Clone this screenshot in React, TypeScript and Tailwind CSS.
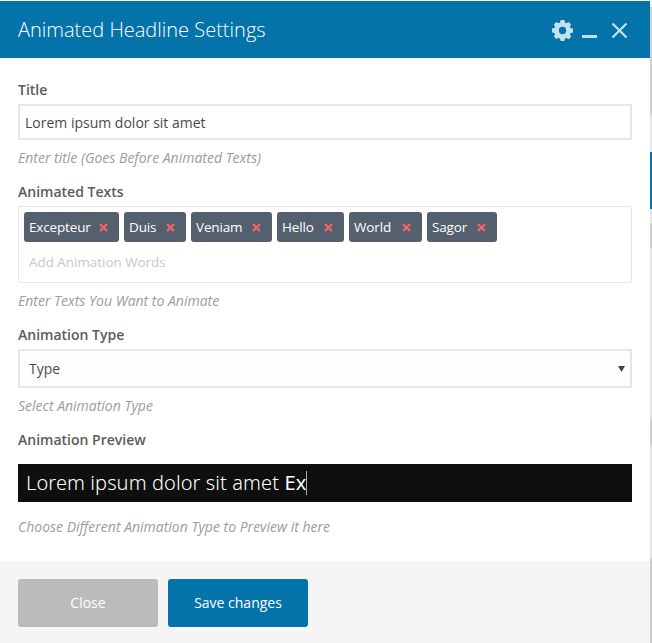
const font = "font-['Open_Sans',sans-serif]";

function Tag({ label, w }: { label: string; w: string }) {
  return (
    <span className={`${w} flex h-[30px] items-center justify-between rounded-[3px] bg-[#54606e] pr-[11px] pl-[5px] text-[13.500px] tracking-[-0.15px] text-white`}>
      {label}
      <svg width="9" height="9" viewBox="0 0 9 9" fill="none" stroke="#fa616a" strokeWidth="2.200">
        <path d="M1 1 8 8M8 1 1 8" />
      </svg>
    </span>
  );
}

function Label({ children }: { children: string }) {
  return <div className="text-[14px] leading-[20px] font-semibold text-[#5b5b5b]">{children}</div>;
}

function Hint({ children }: { children: string }) {
  return <div className="text-[14px] leading-[20px] text-[#9c9c9c] italic">{children}</div>;
}

export default function App() {
  return (
    <div className={`${font} flex h-[643px] w-[652px] overflow-hidden bg-white`}>
      <div className="w-[650px] shrink-0">
        <header className="mt-px flex h-[57px] items-center justify-between bg-[#0473aa] pr-[22px] pl-[18px] pt-px">
          <h1 className="text-[20px] font-light text-white">Animated Headline Settings</h1>
          <div className="flex items-center text-[#c4e0ee]">
            <svg width="21" height="21" viewBox="0 0 22 22" fill="currentColor">
              <path fillRule="evenodd" d="M9 0h4l.6 2.600 1.500.7L17.500 2l2.600 2.600-1.300 2.400.7 1.500 2.500.6v4l-2.500.6-.7 1.500 1.300 2.300-2.600 2.600-2.400-1.300-1.500.7L13 22H9l-.6-2.500-1.500-.7L4.500 20l-2.600-2.600 1.300-2.300-.7-1.500L0 13V9l2.500-.6.7-1.500L1.900 4.600 4.500 2l2.400 1.300 1.500-.7zM11 7.200a3.800 3.800 0 1 0 0 7.600 3.800 3.800 0 0 0 0-7.600z" />
            </svg>
            <span className="mt-[13px] ml-[9px] h-[3px] w-[15px] bg-current" />
            <svg className="ml-[14px]" width="17" height="17" viewBox="0 0 17 17" fill="none" stroke="currentColor" strokeWidth="2.200">
              <path d="M1.500 1.500 15.500 15.500M15.500 1.500 1.500 15.500" />
            </svg>
          </div>
        </header>

        <main className="flex h-[503px] flex-col px-[18px] pt-[22px]">
          <Label>Title</Label>
          <div className="mt-[4px] flex h-[36px] items-center border-2 border-[#e6e6e6] px-[5px] text-[14px] text-[#4a4a4a]">
            Lorem ipsum dolor sit amet
          </div>
          <div className="mt-[8px]"><Hint>Enter title (Goes Before Animated Texts)</Hint></div>

          <div className="mt-[14px]"><Label>Animated Texts</Label></div>
          <div className="mt-[4px] h-[77px] rounded-[2px] border border-[#e6e6e6] px-[5px] pt-[5px]">
            <div className="flex gap-[5px]">
              <Tag label="Excepteur" w="w-[95px]" />
              <Tag label="Duis" w="w-[62px]" />
              <Tag label="Veniam" w="w-[81px]" />
              <Tag label="Hello" w="w-[67px]" />
              <Tag label="World" w="w-[73px]" />
              <Tag label="Sagor" w="w-[70px]" />
            </div>
            <div className="mt-[10px] pl-[5px] text-[13.400px] leading-[20px] text-[#c8c8c8]">Add Animation Words</div>
          </div>
          <div className="mt-[8px]"><Hint>Enter Texts You Want to Animate</Hint></div>

          <div className="mt-[14px]"><Label>Animation Type</Label></div>
          <div className="mt-[4px] flex h-[39px] items-center justify-between border-2 border-[#e6e6e6] bg-[#fdfdfd] pr-[5px] pl-[9px] text-[14px] text-[#4a4a4a]">
            Type
            <svg width="7" height="6" viewBox="0 0 7 6" fill="#3f444a"><path d="M0 0h7L3.500 6z" /></svg>
          </div>
          <div className="mt-[8px]"><Hint>Select Animation Type</Hint></div>

          <div className="mt-[14px]"><Label>Animation Preview</Label></div>
          <div className="mt-[14px] flex h-[38px] items-center bg-[#0f0f0f] pl-[8px] font-['Noto_Sans',sans-serif] text-[20px] font-light tracking-[0.1px] text-white">
            Lorem ipsum dolor sit amet&nbsp;<b className="font-normal">Ex</b>
            <span className="h-[24px] w-px bg-[#9fb3bb]" />
          </div>
          <div className="mt-[15px]"><Hint>Choose Different Animation Type to Preview it here</Hint></div>
        </main>

        <footer className="flex h-[82px] gap-[10px] bg-[#f5f5f5] px-[18px] pt-[18px]">
          <button className="h-[48px] w-[140px] rounded-[3px] bg-[#bbbbbb] pb-[2px] text-[14px] text-white">Close</button>
          <button className="h-[48px] w-[140px] rounded-[3px] bg-[#0473aa] pb-[2px] text-[14px] text-white">Save changes</button>
        </footer>
      </div>

      <div className="flex w-[2px] shrink-0 flex-col">
        <div className="h-[7px] bg-[#f2f2f2]" />
        <div className="h-[108px] bg-[#d0d0d0]" />
        <div className="h-[37px] bg-[#e6e6e6]" />
        <div className="h-[57px] bg-[#0473aa]" />
        <div className="h-[14px] bg-[#e6e6e6]" />
        <div className="h-[26px] bg-[#cfcfcf]" />
        <div className="h-[171px] bg-[#e4e4e4]" />
        <div className="h-[25px] bg-[#cfcfcf]" />
        <div className="h-[113px] bg-[#e4e4e4]" />
        <div className="h-[85px] bg-[#cfcfcf]" />
      </div>
    </div>
  );
}
